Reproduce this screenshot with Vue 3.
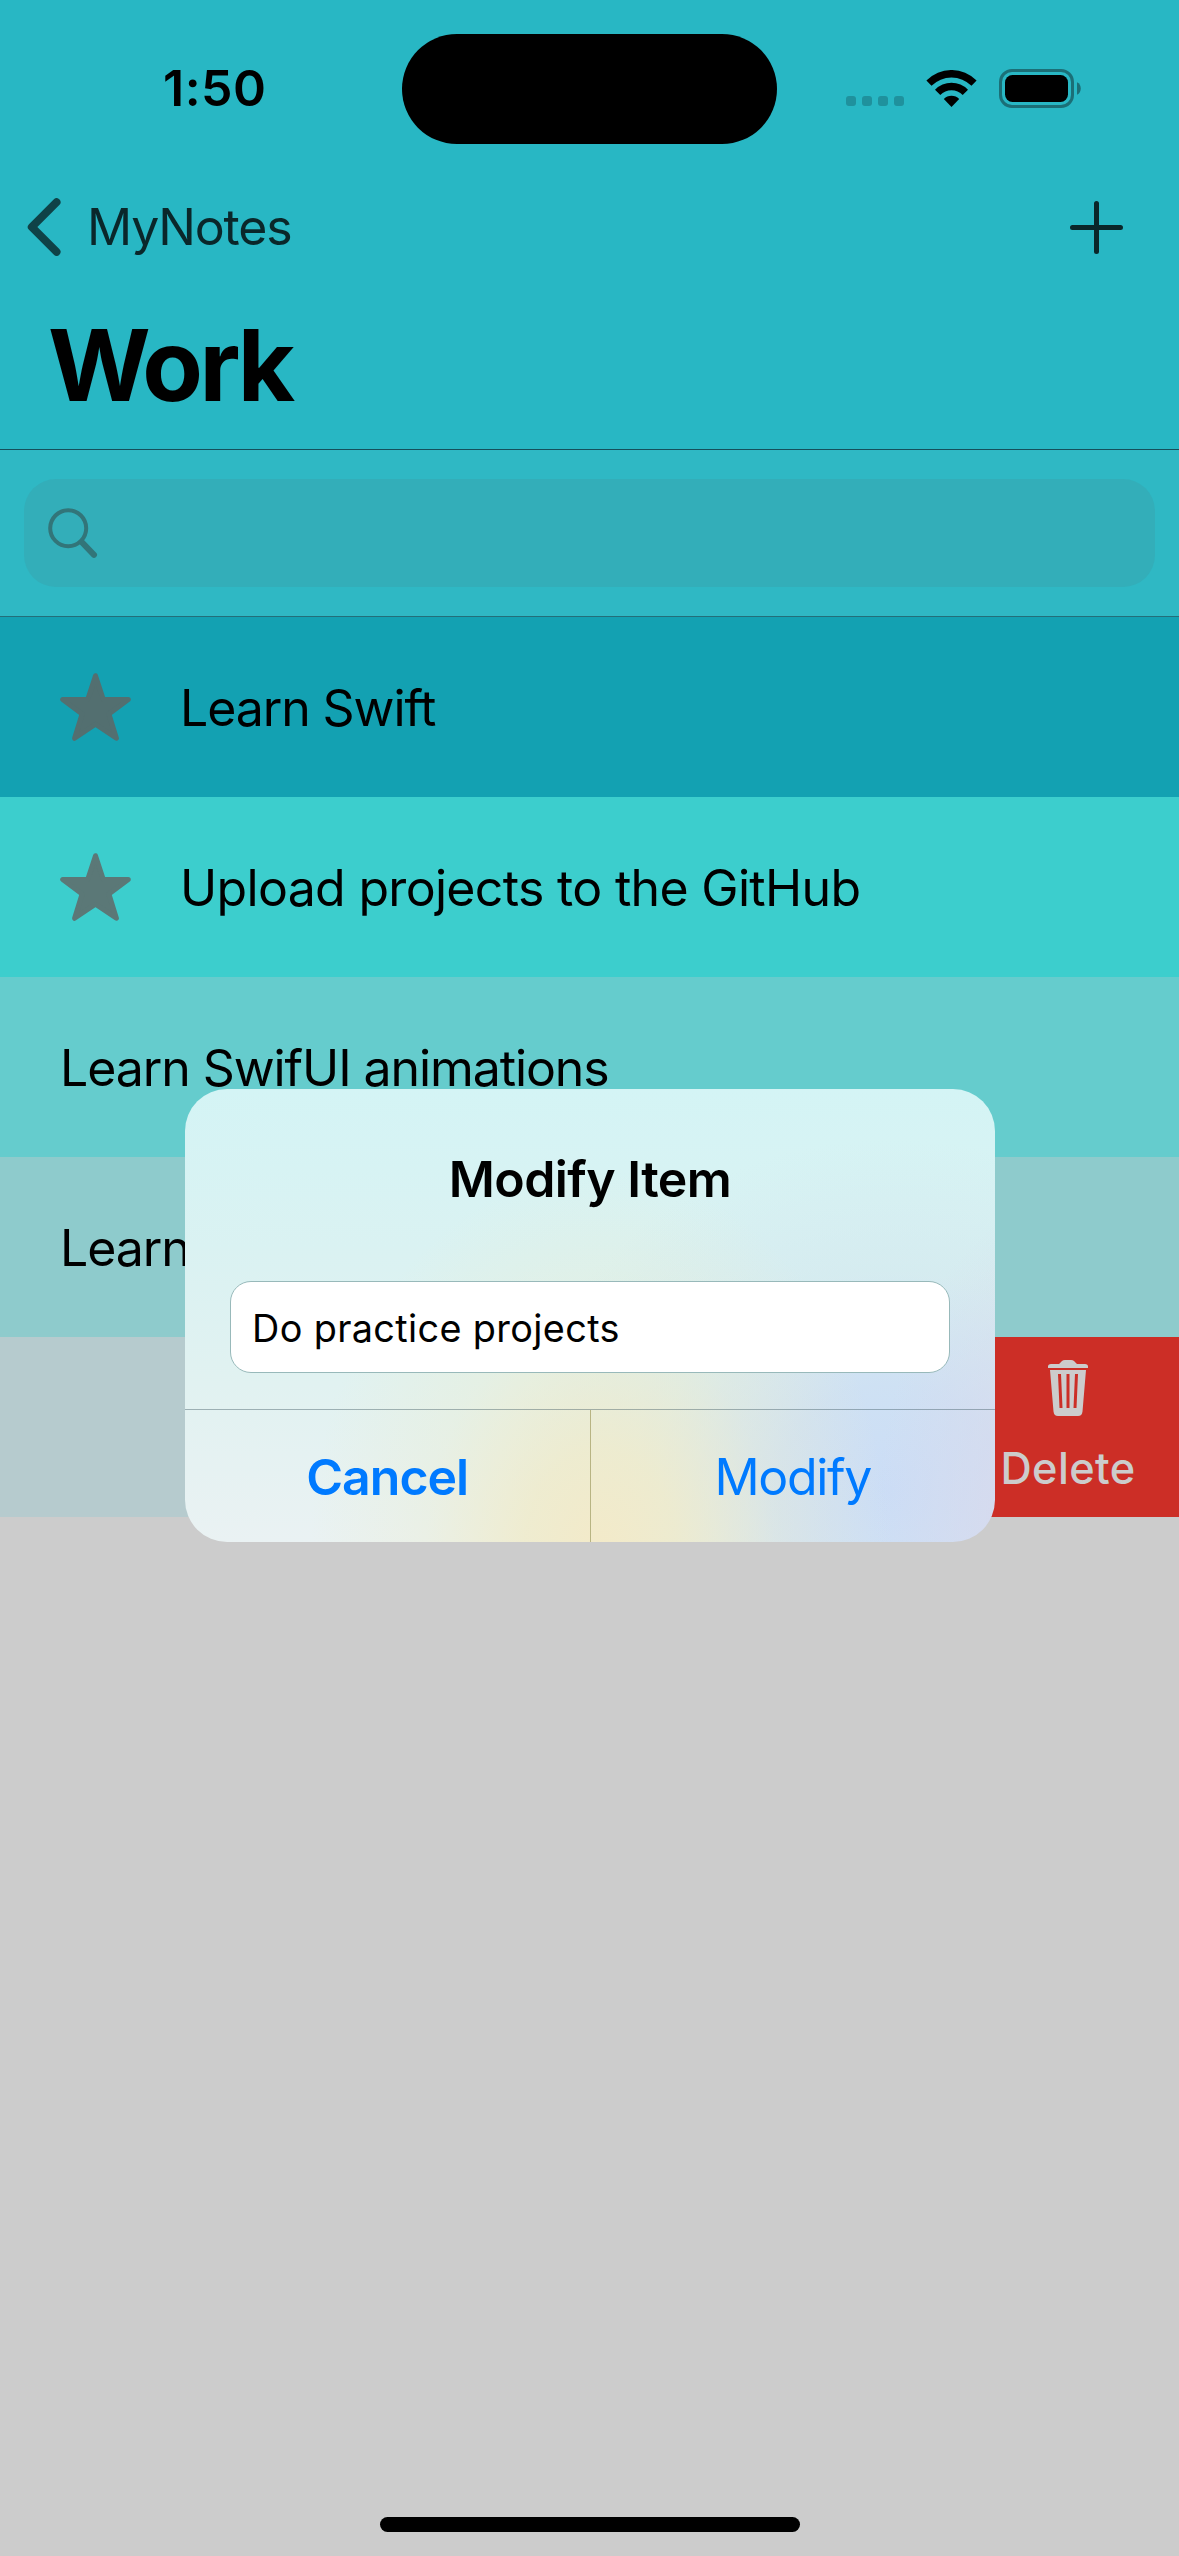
<script setup>
import { ref } from 'vue'

const rows = [
  { text: 'Learn Swift', starred: true, tone: 'tone-1', fit: 'fit-tight' },
  { text: 'Upload projects to the GitHub', starred: true, tone: 'tone-2', fit: 'fit-loose' },
  { text: 'Learn SwifUI animations', starred: false, tone: 'tone-3', fit: 'fit-medium' },
  { text: 'Learn', starred: false, tone: 'tone-4', fit: 'fit-tight' },
]
const draft = ref('Do practice projects')
</script>

<template>
  <main class="phone">
    <header class="header">
      <div class="status">
        <span class="time">1:50</span>
        <span class="island"></span>
        <svg class="cell" width="58" height="10" viewBox="0 0 58 10">
          <rect v-for="i in 4" :key="i" :x="(i - 1) * 16" y="0" width="10" height="10" rx="3" />
        </svg>
        <svg class="wifi" width="51" height="37" viewBox="0 0 51 37">
          <path d="M0.4 10.6 A35 35 0 0 1 50.6 10.6 L45.5 15.8 A28.500 28.500 0 0 0 5.500 15.8 Z" />
          <path d="M9 19.800 A22.900 22.900 0 0 1 42 19.800 L36.700 25 A15.500 15.500 0 0 0 14.300 25 Z" />
          <path d="M17.800 29 A11 11 0 0 1 33.200 29 L25.500 37 Z" />
        </svg>
        <svg class="battery" width="82" height="39" viewBox="0 0 82 39">
          <rect class="shell" x="1.5" y="1.5" width="72" height="36" rx="11.5" />
          <rect x="6" y="6" width="63" height="27" rx="7.5" />
          <path class="nub" d="M78 13.3 C83 15.5 83 23.5 78 25.8 Z" />
        </svg>
      </div>
      <nav class="nav">
        <svg class="chevron" width="34" height="58" viewBox="0 0 34 58"><path d="M29.5 4.2 L4.8 29 L29.5 53.8" /></svg>
        <span class="back">MyNotes</span>
        <svg class="plus" width="53" height="53" viewBox="0 0 53 53"><path d="M26.5 2.5 V50.5 M2.5 26.5 H50.5" /></svg>
      </nav>
      <h1 class="title">Work</h1>
    </header>

    <section class="search">
      <div class="search-field">
        <svg width="50" height="51" viewBox="0 0 50 51">
          <circle cx="20.2" cy="20.2" r="18" /><path d="M33.8 34.2 L46 46.8" />
        </svg>
      </div>
    </section>

    <ul class="list">
      <li v-for="row in rows" :key="row.text" class="row" :class="row.tone">
        <svg v-if="row.starred" class="star" width="71" height="69" viewBox="0 0 71 69">
          <path d="M35.5 2.7 L43.3 26.5 H68.3 L48.9 41 L56.4 65.3 L35.5 51.2 L14.6 65.3 L22.1 41 L2.7 26.5 H27.7 Z" />
        </svg>
        <span :class="row.fit">{{ row.text }}</span>
      </li>
      <li class="row swiped">
        <div class="delete">
          <svg width="40" height="56" viewBox="0 0 40 56">
            <path d="M0 8 V6.5 Q0 4 3 4 H11 L14 1 Q15 0 17 0 H23 Q25 0 26 1 L29 4 H37 Q40 4 40 6.500 V8 Z" />
            <path fill-rule="evenodd" d="M2 10 H38 L34.500 51.500 Q34 56 30 56 H10 Q6 56 5.500 51.500 Z M10 14 L11.500 48 H14.500 L13 14 Z M18.500 14 V48 H21.500 V14 Z M27 14 L25.500 48 H28.500 L30 14 Z" />
          </svg>
          <span>Delete</span>
        </div>
      </li>
    </ul>

    <section class="dialog">
      <div class="dialog-body">
        <h2>Modify Item</h2>
        <div class="input">{{ draft }}</div>
      </div>
      <div class="actions">
        <button class="cancel">Cancel</button>
        <button class="modify">Modify</button>
      </div>
    </section>
    <div class="home"></div>
  </main>
</template>

<style>
body { margin: 0; }
</style>

<style scoped>
.phone { position: relative; width: 1179px; height: 2556px; overflow: hidden; background: #ccc; color: #000; font: 400 50px/1.2 Inter, "Liberation Sans", sans-serif; white-space: nowrap; }
.header { box-sizing: border-box; height: 450px; background: #28b7c4; border-bottom: 1px solid #154f5b; }
.status { display: flex; align-items: center; height: 176px; }
.time { width: 239px; padding: 0 0 1px 163px; font-weight: 600; letter-spacing: 0.5px; }
.island { width: 375px; height: 110px; margin-top: 2px; border-radius: 55px; background: #000; }
.cell { margin: 26px 22px 0 69px; fill: #1f919d; }
.battery { margin-left: 22px; }
.shell { fill: none; stroke: #1b6f77; stroke-width: 3; }
.nub { fill: #1b6f77; }
.nav { display: flex; align-items: center; height: 102px; padding: 0 56px 0 27px; }
.chevron { fill: none; stroke: #0f4247; stroke-width: 8; stroke-linecap: round; stroke-linejoin: round; }
.back { margin-left: 26px; padding-bottom: 1px; color: #0a272a; letter-spacing: -1.2px; }
.plus { margin-left: auto; stroke: #0a272a; stroke-width: 5; stroke-linecap: round; }
.title { margin: 0; padding: 4px 0 0 48px; font-size: 99px; line-height: 167px; font-weight: 700; letter-spacing: -3.5px; }
.search { box-sizing: border-box; height: 167px; padding: 29px 24px 0; background: #2fb8c4; border-bottom: 1px solid #236f7a; }
.search-field { display: flex; align-items: center; box-sizing: border-box; height: 108px; padding-left: 24px; border-radius: 32px; background: #33aeb9; }
.search-field svg { fill: none; stroke: #327579; stroke-width: 4; stroke-linecap: round; }
.search-field path { stroke-width: 6; }
.list { margin: 0; padding: 0; list-style: none; }
.row { display: flex; align-items: center; box-sizing: border-box; height: 180px; padding: 2px 0 0 60px; }
.star { margin: -2px 49px 0 0; stroke-width: 5; stroke-linejoin: round; fill: #536f70; stroke: #536f70; }
.fit-tight { letter-spacing: -1.1px; }
.fit-medium { letter-spacing: -1.08px; }
.fit-loose { letter-spacing: -0.68px; }
.tone-1 { background: #13a1b2; }
.tone-2 { background: #3ccecd; }
.tone-2 .star { fill: #5b7877; stroke: #5b7877; }
.tone-3 { background: #65cccd; }
.tone-4 { background: #8ecbcc; }
.swiped { justify-content: flex-end; padding: 0; background: #b6cbce; }
.delete { display: flex; flex-direction: column; align-items: center; gap: 27px; box-sizing: border-box; width: 222px; height: 180px; padding-top: 23px; background: #cc2e26; color: #ccc; font-size: 43.3px; font-weight: 500; letter-spacing: 0.4px; }
.delete svg { fill: #ccc; }
.dialog {
  position: absolute; left: 185px; top: 1089px; width: 810px; height: 453px; border-radius: 42px; overflow: hidden;
  background:
    radial-gradient(ellipse 290px 380px at 415px 460px, #f3eac9 0%, rgba(240, 235, 202, 0.85) 26%, rgba(236, 236, 205, 0.35) 60%, rgba(230, 240, 225, 0) 100%),
    radial-gradient(ellipse 190px 340px at 880px 450px, #dad6ea 0%, rgba(216, 216, 236, 0.6) 45%, rgba(216, 216, 236, 0) 100%),
    radial-gradient(ellipse 380px 350px at 705px 400px, #cbddf6 0%, rgba(203, 222, 244, 0.85) 30%, rgba(206, 228, 238, 0.45) 62%, rgba(213, 240, 243, 0) 100%),
    linear-gradient(#d4f4f5 0%, #daf2f2 35%, #e1f2f1 65%, #eaf2f3 100%);
}
.dialog-body { box-sizing: border-box; height: 321px; padding: 60px 45px 0; border-bottom: 1px solid rgba(60, 85, 95, 0.42); }
h2 { margin: 0 0 72px; font-size: 50px; line-height: 60px; font-weight: 600; text-align: center; letter-spacing: -0.55px; }
.input { box-sizing: border-box; height: 92px; padding-left: 21px; border: 1px solid #98b9ba; border-radius: 21px; background: #fff; font-size: 37.8px; line-height: 92px; letter-spacing: 0.36px; }
.actions { display: flex; height: 132px; }
button { flex: 1; border: 0; padding: 2px 0 0; background: none; color: #007aff; font: inherit; letter-spacing: -1.35px; }
.cancel { font-weight: 600; letter-spacing: -1px; border-right: 1px solid #b8b483; }
.home { position: absolute; left: 380px; top: 2517px; width: 420px; height: 15px; border-radius: 8px; background: #000; }
</style>
